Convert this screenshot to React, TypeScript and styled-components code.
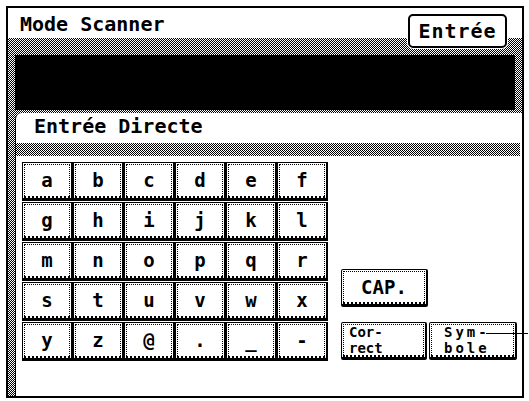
import * as React from 'react';
import styled, { createGlobalStyle } from 'styled-components';

const GlobalStyle = createGlobalStyle`
    html, body {
        margin: 0;
        padding: 0;
        background: #fff;
    }
`;

// 1px checker used for the grey bands of the LCD panel
const dither = 'repeating-conic-gradient(#000 0 25%, #fff 0 50%) 0 0 / 2px 2px';

const rows = [
    ['a', 'b', 'c', 'd', 'e', 'f'],
    ['g', 'h', 'i', 'j', 'k', 'l'],
    ['m', 'n', 'o', 'p', 'q', 'r'],
    ['s', 't', 'u', 'v', 'w', 'x'],
    ['y', 'z', '@', '.', '_', '-'],
];

export default class App extends React.Component {
    renderKeys = () => {
        let keys = [];

        rows.map((row, r) => {
            row.map((label, c) => {
                keys.push(<Key key={r + '-' + c}>{label}</Key>);
            });
        });

        return keys;
    }

    render() {
        return (
            <>
                <GlobalStyle />
                <Frame>
                    <TitleBar>
                        <Title>Mode Scanner</Title>
                        <EnterButton>Entrée</EnterButton>
                    </TitleBar>
                    <Body>
                        <Display />
                        <Panel>
                            <PanelTitle>Entrée Directe</PanelTitle>
                            <Band />
                            <KeyArea>
                                <KeyGrid>{this.renderKeys()}</KeyGrid>
                                <SideColumn>
                                    <SideKey width={87}>CAP.</SideKey>
                                    <SideRow>
                                        <SideKey width={86} small>
                                            <TwoLine>Cor-<br />rect</TwoLine>
                                        </SideKey>
                                        <SideKey width={88} small wide>
                                            <TwoLine>Sym-<br />bole</TwoLine>
                                            <Leader />
                                        </SideKey>
                                    </SideRow>
                                </SideColumn>
                            </KeyArea>
                        </Panel>
                    </Body>
                </Frame>
            </>
        );
    }
}

const Frame = styled.div`
    position: relative;
    box-sizing: border-box;
    margin: 6px 0 0 6px;
    width: 518px;
    height: 392px;
    border: 2px solid #000;
    display: flex;
    flex-direction: column;
    font-family: "DejaVu Sans Mono", monospace;
    font-weight: bold;
    color: #000;
`;

const TitleBar = styled.div`
    height: 30px;
    flex: none;
    display: flex;
    justify-content: space-between;
    align-items: flex-start;
`;

const Title = styled.div`
    font-size: 20px;
    line-height: 24px;
    padding: 4px 0 0 12px;
`;

const EnterButton = styled.div`
    position: relative;
    z-index: 1;
    box-sizing: border-box;
    width: 99px;
    height: 34px;
    margin: 6px 15px -10px 0;
    border: 2px solid #000;
    border-radius: 5px;
    background: #fff;
    box-shadow: 0 0 0 1px #fff;
    display: flex;
    align-items: center;
    justify-content: center;
    font-size: 20px;
    letter-spacing: 1px;
`;

const Body = styled.div`
    flex: 1;
    display: flex;
    flex-direction: column;
    gap: 3px;
    padding: 17px 0 0 7px;
    background: ${dither};
`;

const Display = styled.div`
    height: 55px;
    margin-right: 7px;
    background: #000;
`;

const Panel = styled.div`
    flex: 1;
    display: flex;
    flex-direction: column;
    background: #fff;
    border-left: 1px solid #000;
    border-top-left-radius: 6px;
`;

const PanelTitle = styled.div`
    height: 30px;
    box-sizing: border-box;
    padding: 1px 0 0 18px;
    font-size: 20px;
    line-height: 24px;
`;

const Band = styled.div`
    height: 13px;
    margin-right: 2px;
    background: ${dither};
`;

const KeyArea = styled.div`
    display: flex;
    align-items: flex-end;
    padding: 6px 0 0 6px;
`;

const KeyGrid = styled.div`
    display: grid;
    grid-template-columns: repeat(6, 51px);
    grid-auto-rows: 39px;
    row-gap: 1px;
`;

const Key = styled.div`
    position: relative;
    box-sizing: border-box;
    border: 1px solid #000;
    border-right-width: 2px;
    border-bottom-width: 3px;
    background: #fff;
    display: flex;
    align-items: center;
    justify-content: center;
    font-size: 19px;
    line-height: 19px;

    &::before {
        content: '';
        position: absolute;
        inset: 1px 1px 0 1px;
        border: 1px dotted #000;
        border-bottom-width: 2px;
    }
`;

const SideColumn = styled.div`
    display: flex;
    flex-direction: column;
    align-items: flex-start;
    gap: 15px;
    margin: 0 0 1px 13px;
`;

const SideRow = styled.div`
    display: flex;
    gap: 2px;
`;

const SideKey = styled(Key)<{ width: number; small?: boolean; wide?: boolean }>`
    width: ${props => props.width}px;
    height: 38px;
    justify-content: ${props => props.small ? 'flex-start' : 'center'};
    padding-left: ${props => props.wide ? 14 : props.small ? 7 : 0}px;
    font-size: ${props => props.small ? 14 : 19}px;
    letter-spacing: ${props => props.wide ? 3 : 0}px;
    border-radius: 2px;
`;

const TwoLine = styled.span`
    display: block;
    line-height: 16.5px;
`;

// pointer line running out of the Symbole key past the frame
const Leader = styled.span`
    position: absolute;
    left: 56px;
    top: 10px;
    width: 42px;
    height: 1px;
    background: #000;
`;
